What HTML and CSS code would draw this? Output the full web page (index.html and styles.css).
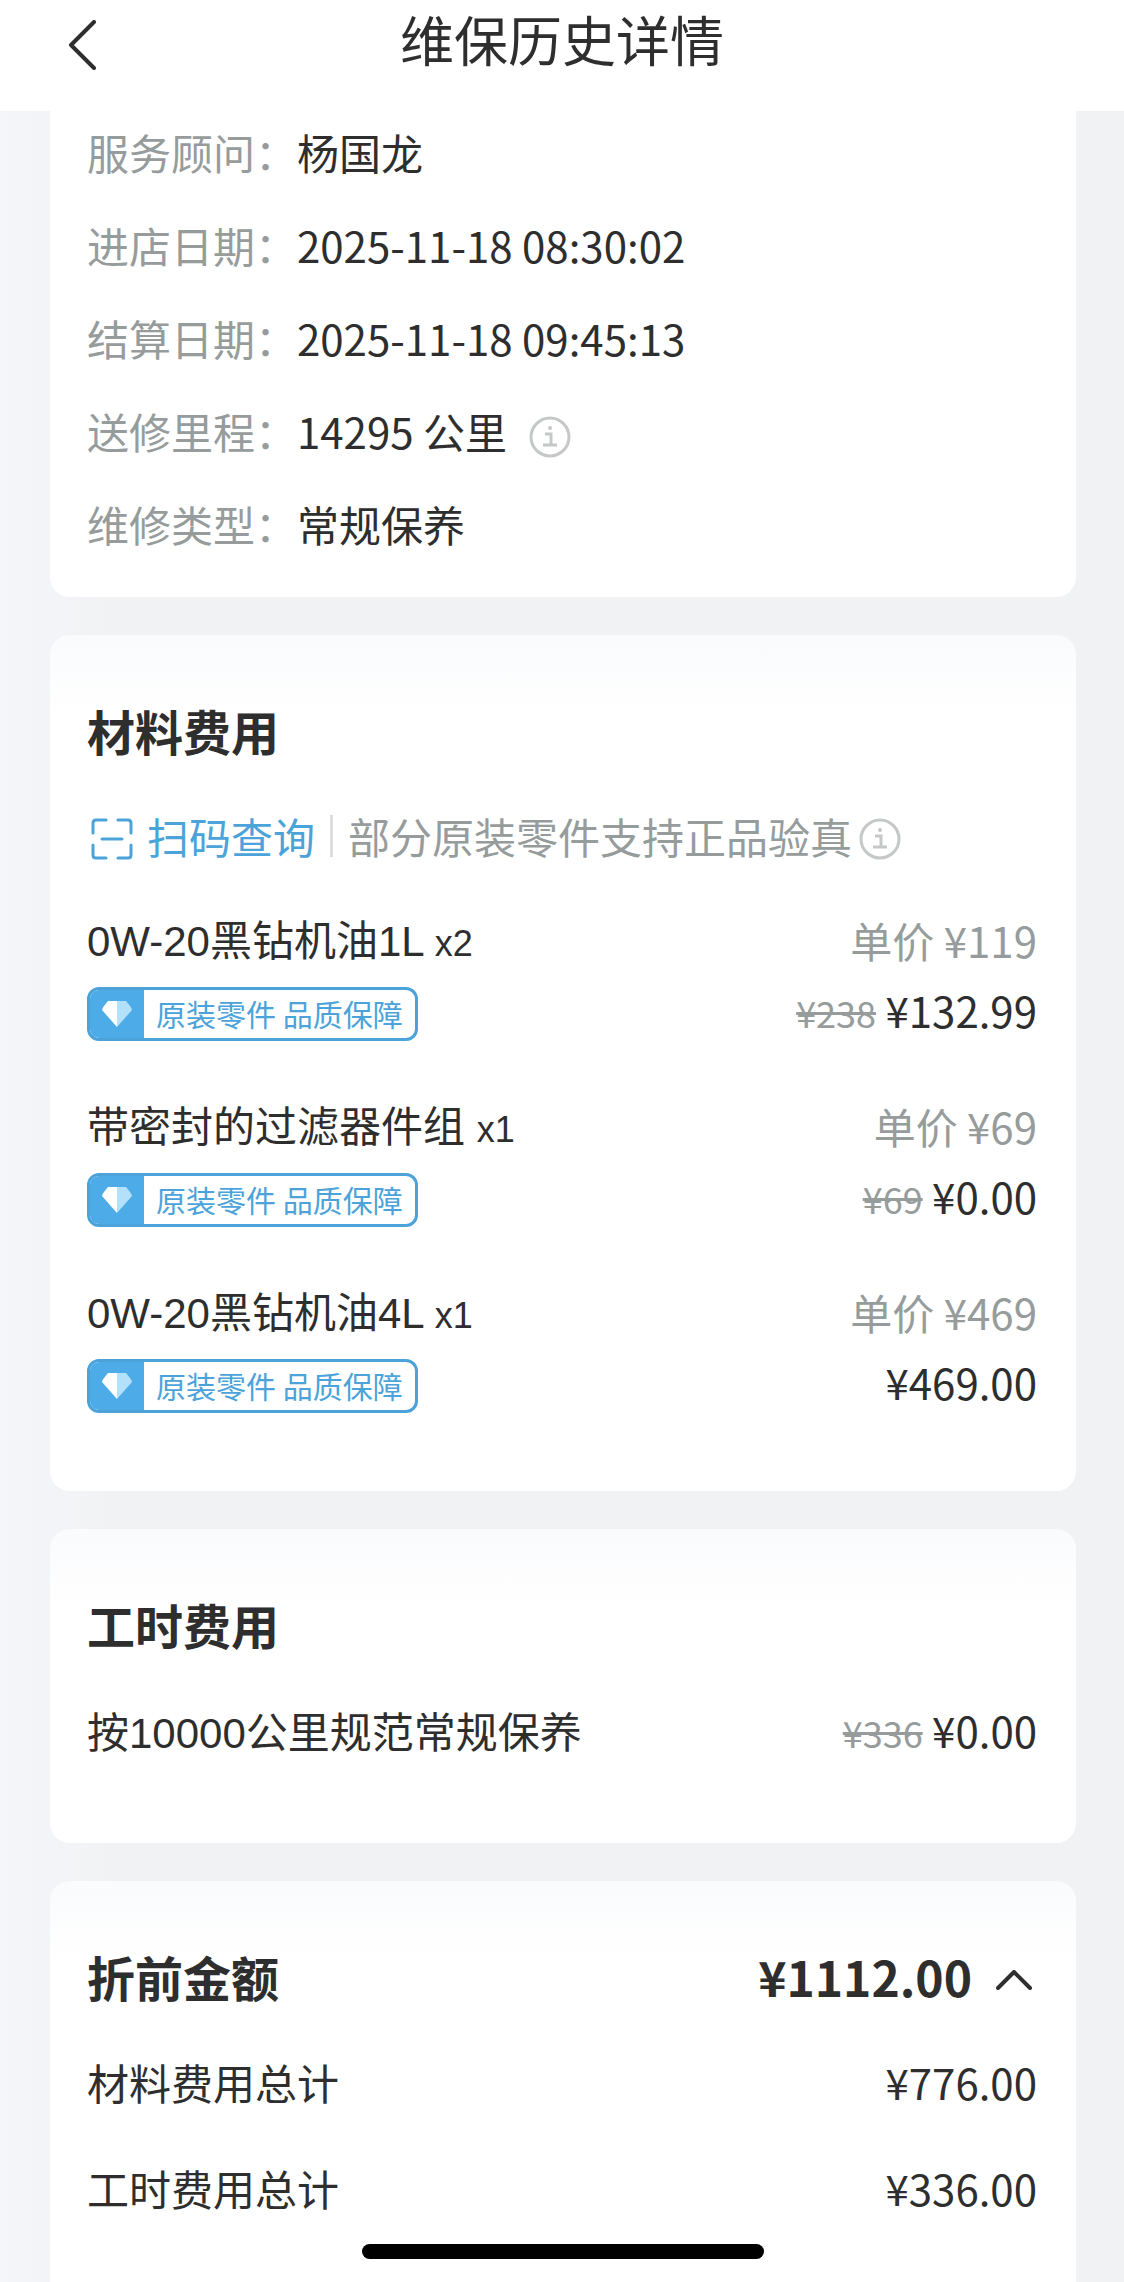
FILE: index.html
```html
<!DOCTYPE html>
<html lang="zh-CN">
<head>
<meta charset="utf-8">
<meta name="viewport" content="width=device-width, initial-scale=1">
<title>维保历史详情</title>
<link rel="stylesheet" href="styles.css">
</head>
<body>
<svg class="sprite" aria-hidden="true">
  <symbol id="info" viewBox="0 0 42 42">
    <circle cx="21" cy="21" r="19" fill="none" stroke="currentColor" stroke-width="3"/>
    <circle cx="21" cy="12" r="2" fill="currentColor"/>
    <path d="M16 18h6v11M14 29h14" fill="none" stroke="currentColor" stroke-width="3"/>
  </symbol>
  <symbol id="gem" viewBox="0 0 30 26">
    <path d="M6 0H15V26L0 9Q0 7 6 0Z" fill="#fff"/>
    <path d="M15 0H24Q30 7 30 9L15 26Z" fill="#b3e0fb"/>
  </symbol>
</svg>

<header class="topbar">
  <button class="back" type="button" aria-label="返回">
    <svg width="28" height="50" viewBox="0 0 28 50"><path d="M26 2 3 25 26 48" fill="none" stroke="currentColor" stroke-width="4" stroke-linecap="round" stroke-linejoin="round"/></svg>
  </button>
  <h1 class="title">维保历史详情</h1>
</header>

<main class="page">
  <section class="card card-first">
    <dl class="facts">
      <div class="fact"><dt>服务顾问：</dt><dd>杨国龙</dd></div>
      <div class="fact"><dt>进店日期：</dt><dd>2025-11-18 08:30:02</dd></div>
      <div class="fact"><dt>结算日期：</dt><dd>2025-11-18 09:45:13</dd></div>
      <div class="fact"><dt>送修里程：</dt><dd class="mileage"><span>14295 公里</span><button class="info" type="button" aria-label="里程说明"><svg width="42" height="42"><use href="#info"/></svg></button></dd></div>
      <div class="fact"><dt>维修类型：</dt><dd>常规保养</dd></div>
    </dl>
  </section>

  <section class="card">
    <h2 class="heading">材料费用</h2>
    <div class="scan-row">
      <a class="scan" href="#scan">
        <svg width="42" height="42" viewBox="0 0 42 42" fill="none" stroke="currentColor" stroke-width="3" stroke-linecap="round"><path d="M2 15V5Q2 2 5 2H15M27 2H37Q40 2 40 5V15M40 27V37Q40 40 37 40H27M15 40H5Q2 40 2 37V27M11 21H31"/></svg>
        <span>扫码查询</span>
      </a>
      <span class="note">部分原装零件支持正品验真</span>
      <button class="info" type="button" aria-label="验真说明"><svg width="42" height="42"><use href="#info"/></svg></button>
    </div>
    <ul class="items">
      <li class="item">
        <div>
          <p class="name">0W-20黑钻机油1L <span class="qty">x2</span></p>
          <p class="badge"><span class="badge-icon"><svg width="30" height="26"><use href="#gem"/></svg></span><span class="badge-text">原装零件 品质保障</span></p>
        </div>
        <div class="prices">
          <p class="unit">单价 ¥119</p>
          <p><del>¥238</del> ¥132.99</p>
        </div>
      </li>
      <li class="item">
        <div>
          <p class="name">带密封的过滤器件组 <span class="qty">x1</span></p>
          <p class="badge"><span class="badge-icon"><svg width="30" height="26"><use href="#gem"/></svg></span><span class="badge-text">原装零件 品质保障</span></p>
        </div>
        <div class="prices">
          <p class="unit">单价 ¥69</p>
          <p><del>¥69</del> ¥0.00</p>
        </div>
      </li>
      <li class="item">
        <div>
          <p class="name">0W-20黑钻机油4L <span class="qty">x1</span></p>
          <p class="badge"><span class="badge-icon"><svg width="30" height="26"><use href="#gem"/></svg></span><span class="badge-text">原装零件 品质保障</span></p>
        </div>
        <div class="prices">
          <p class="unit">单价 ¥469</p>
          <p>¥469.00</p>
        </div>
      </li>
    </ul>
  </section>

  <section class="card">
    <h2 class="heading">工时费用</h2>
    <div class="line">
      <span class="name">按10000公里规范常规保养</span>
      <span><del>¥336</del> ¥0.00</span>
    </div>
  </section>

  <section class="card card-last">
    <div class="total">
      <h2 class="heading">折前金额</h2>
      <button class="toggle" type="button" aria-expanded="true">
        <span>¥1112.00</span>
        <svg width="36" height="20" viewBox="0 0 36 20"><path d="M2 18 18 2 34 18" fill="none" stroke="currentColor" stroke-width="4" stroke-linecap="round" stroke-linejoin="round"/></svg>
      </button>
    </div>
    <div class="line"><span>材料费用总计</span><span>¥776.00</span></div>
    <div class="line"><span>工时费用总计</span><span>¥336.00</span></div>
  </section>
</main>
<div class="home-bar"></div>
</body>
</html>
```
FILE: styles.css
```css
* {
  box-sizing: border-box;
  margin: 0;
  padding: 0;
}

body {
  display: flex;
  flex-direction: column;
  min-height: 100vh;
  background: linear-gradient(90deg, #f5f6f9, #f1f2f4 10%, #f1f2f4);
  color: #2e2e2e;
  font-family: "Noto Sans CJK SC", sans-serif;
  font-size: 42px;
  line-height: 70px;
}

button {
  border: 0;
  background: none;
  color: inherit;
  font: inherit;
}

svg {
  display: block;
}

.sprite {
  position: absolute;
  width: 0;
  height: 0;
}

.topbar {
  display: grid;
  grid-template-columns: 1fr auto 1fr;
  align-items: start;
  height: 111px;
  padding: 0 68px;
  background: #fff;
}

.back {
  justify-self: start;
  margin-top: 20px;
}

.title {
  font-size: 54px;
  font-weight: 400;
  line-height: 78px;
}

.page {
  display: flex;
  flex: 1;
  flex-direction: column;
  gap: 38px;
  padding: 0 48px 0 50px;
}

.card {
  padding: 60px 39px 72px 37px;
  border-radius: 20px;
  background: linear-gradient(#fafbfd, #fff 80px);
}

.card-first {
  display: flow-root;
  padding-top: 0;
  padding-bottom: 27px;
  border-radius: 0 0 20px 20px;
  background: #fff;
}

.card-last {
  flex: 1;
  padding-bottom: 55px;
  border-radius: 20px 20px 0 0;
}

.facts {
  margin-top: -6px;
}

.fact {
  display: flex;
  line-height: 93px;
}

.fact dt {
  width: 210px;
  color: #969c9c;
  white-space: nowrap;
}

.mileage {
  display: flex;
  align-items: center;
  gap: 22px;
}

.info {
  padding-top: 6px;
  color: #c6c8c8;
}

.mileage .info {
  padding-top: 12px;
}

.heading {
  font-size: 48px;
  font-weight: 700;
}

.scan-row {
  display: flex;
  align-items: center;
  height: 70px;
  margin: 36px 0 34px;
}

.scan {
  display: flex;
  align-items: center;
  gap: 14px;
  padding: 0 15px 0 4px;
  color: #4ba3da;
  text-decoration: none;
}

.scan svg {
  margin-top: 6px;
}

.note {
  padding-left: 15px;
  border-left: 3px solid #dcdede;
  color: #969c9c;
  line-height: 42px;
}

.scan-row .info {
  margin-left: 7px;
}

.items {
  display: grid;
  gap: 46px;
  padding-bottom: 2px;
  list-style: none;
}

.item,
.line,
.total {
  display: flex;
  justify-content: space-between;
}

.name {
  font-family: "Liberation Sans", "Noto Sans CJK SC", sans-serif;
  line-height: 74px;
}

.qty {
  font-size: 36px;
  line-height: 1;
}

.badge {
  display: flex;
  width: fit-content;
  height: 54px;
  margin-top: 8px;
  overflow: hidden;
  border: 3px solid #4ba3da;
  border-radius: 12px;
  background: #fff;
  color: #4ba3da;
  font-size: 30px;
  line-height: 46px;
}

.badge-icon {
  display: grid;
  place-items: center;
  width: 54px;
  background: #4dabe8;
}

.badge-text {
  padding: 0 12px;
}

.prices {
  text-align: right;
}

.unit,
del {
  color: #969c9c;
}

del {
  font-size: 36px;
  line-height: 1;
}

.line {
  align-items: baseline;
  margin-top: 36px;
}

.toggle {
  display: flex;
  align-items: center;
  gap: 24px;
  padding-right: 5px;
  font-size: 48px;
  font-weight: 700;
}

.toggle svg {
  margin-top: 8px;
}

.home-bar {
  position: fixed;
  bottom: 23px;
  left: 50%;
  width: 402px;
  height: 15px;
  margin-left: -200px;
  border-radius: 8px;
  background: #000;
}
```
